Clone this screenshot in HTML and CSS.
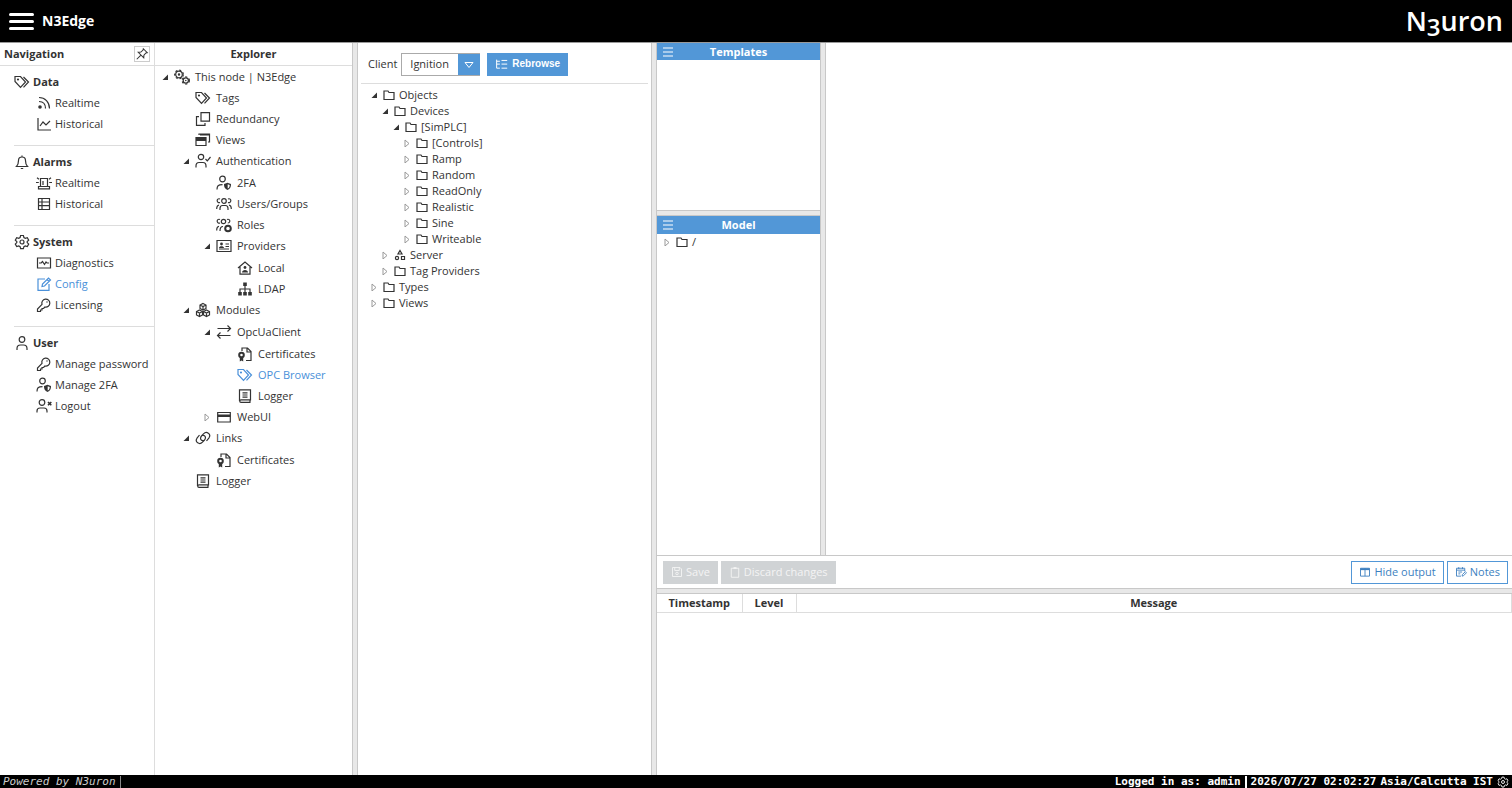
FILE: index.html
```
<!DOCTYPE html>
<html lang="en">
<head>
    <meta charset="UTF-8">
    <meta name="viewport" content="width=device-width, initial-scale=1.0">
    <title>N3Edge - N3uron WebUI</title>
    <link rel="stylesheet" href="styles.css">
</head>
<body>
    <!-- Icon set -->
    <svg class="sprite" aria-hidden="true">
        <symbol id="tags" viewBox="0 0 16 16"><path d="M1 2.500v5l5.500 5.800 5-5.300L6.500 2.500z"/><path d="M9.500 3l5 5-5 5.300"/><circle cx="4" cy="5.500" r=".5"/></symbol>
        <symbol id="rss" viewBox="0 0 16 16"><path d="M3 2.500c6 0 10.500 4.500 10.500 11M3 6.500c4 0 6.500 2.500 6.500 7"/><circle class="fill" cx="4" cy="12" r="1.800"/></symbol>
        <symbol id="chart" viewBox="0 0 16 16"><path d="M2 2v12h13M4 10l3-4 3 3 4-4"/></symbol>
        <symbol id="bell" viewBox="0 0 16 16"><path d="M2.500 12.500c1.500-1.500 2-3 2-6a3.500 3.500 0 0 1 7 0c0 3 .5 4.500 2 6zM8 3V1.500M6.800 14.500h2.400"/></symbol>
        <symbol id="siren" viewBox="0 0 16 16"><path d="M2.500 13.800h11v-2.300h-11zM4.500 11.500V3.500h7v8M7 10V6M0 7.500h2.800M13.200 7.500H16M1 2.800l2 1.500M15 2.800l-2 1.500"/></symbol>
        <symbol id="table" viewBox="0 0 16 16"><path d="M2.500 2.500h11v11h-11zM6 2.500v11M2.500 6h11M2.500 9.700h11"/></symbol>
        <symbol id="gear" viewBox="0 0 16 16"><path d="M6.600 1.500h2.800l.5 2 1.400.8 2-.6 1.400 2.500-1.500 1.400v1l1.500 1.400-1.400 2.500-2-.6-1.400.8-.5 2H6.600l-.5-2-1.400-.8-2 .6L1.300 10l1.500-1.400v-1L1.300 6.200l1.400-2.500 2 .6 1.400-.8z"/><circle cx="8" cy="8" r="2"/></symbol>
        <symbol id="diag" viewBox="0 0 16 16"><path d="M1.500 3h13v10h-13zM3 8h2.200L6.500 6.500l2 3L10 7l1 1h2"/></symbol>
        <symbol id="edit" viewBox="0 0 16 16"><path d="M9 3H2v11.300h11V8M6 10.500l.5-2.500 6-6 2 2-6 6zM11 3.500l2 2"/></symbol>
        <symbol id="key" viewBox="0 0 16 16"><path d="M6 7.300A4 4 0 1 1 9 10L7.500 11.500H6V13H4.500v1.500h-3V12z"/><circle class="fill" cx="11" cy="5" r=".7"/></symbol>
        <symbol id="user" viewBox="0 0 16 16"><circle cx="8" cy="4.500" r="2.800"/><path d="M3 15v-1.500c0-2.500 1.500-3.500 3.500-3.500h3c2 0 3.500 1 3.500 3.500V15"/></symbol>
        <symbol id="user-shield" viewBox="0 0 16 16"><circle cx="6.500" cy="4" r="2.800"/><path d="M1 14.500c0-3.500 1-4.800 5.500-4.800"/><path class="fill" d="M8 9l3.500-1.200L15 9c.2 3-1 5-3.500 6C9 14 7.800 12 8 9z"/><path class="paper" d="M11.700 9.200l2 .7c0 1.800-.6 2.900-2 3.700z"/></symbol>
        <symbol id="user-x" viewBox="0 0 16 16"><circle cx="6" cy="4.500" r="2.800"/><path d="M1 14.500v-1.500c0-2 1-3 3-3h4c2 0 3 1 3 3v1.500"/><path class="bold" d="M12 4l3.300 3.300M15.300 4L12 7.300"/></symbol>
        <symbol id="user-check" viewBox="0 0 16 16"><circle cx="6" cy="4" r="2.700"/><path d="M1 14.500v-1.500c0-2.500 1-3.500 3-3.500h4c2 0 3 1 3 3.500v1.500M10.500 6l1.800 1.800L15.500 4"/></symbol>
        <symbol id="users" viewBox="0 0 16 16"><circle cx="8" cy="5" r="2.300"/><path d="M4 14v-1.500c0-2 1-3 2.500-3h3c1.500 0 2.500 1 2.500 3V14M4 3C2.200 2.200 1 3.500 1.200 5c.2 1.300 1.500 2 2.800 1.500M12 3c1.800-.8 3 .5 2.800 2-.2 1.300-1.500 2-2.800 1.500M.7 13c0-2.500.3-3.700 2.300-3.900M15.300 13c0-2.500-.3-3.700-2.300-3.900"/></symbol>
        <symbol id="roles" viewBox="0 0 16 16"><circle cx="7.500" cy="4.500" r="2.200"/><path d="M4 14c0-3 .7-4.500 3-4.500M4 2.500C2.200 1.700 1 3 1.200 4.500 1.400 5.800 2.700 6.500 4 6M11 2.500c1.800-.8 3 .5 2.800 2-.2 1-1 1.500-2 1.500M.7 13.500c0-2.500.3-4 2.300-4.200"/><circle class="thick" cx="12" cy="11.500" r="2.800"/></symbol>
        <symbol id="gears" viewBox="0 0 16 16"><circle cx="5" cy="5.500" r="3.300"/><circle class="teeth" cx="5" cy="5.500" r="4.300"/><circle cx="5" cy="5.500" r=".6"/><circle cx="11.800" cy="11.500" r="2.600"/><circle class="teeth" cx="11.800" cy="11.500" r="3.600"/><circle class="fill" cx="11.800" cy="11.500" r=".8"/></symbol>
        <symbol id="copy" viewBox="0 0 16 16"><path d="M6 1.700h8.500v8.500H6zM4 5.700H1.500v8.600h8.500V12"/></symbol>
        <symbol id="windows" viewBox="0 0 16 16"><path d="M1 5.500h10v8H1zM4 3V2h10.500v8H13"/><path class="fill" d="M1 5.500h10v3.500H1zM5 2h9v1.500H5z"/></symbol>
        <symbol id="card" viewBox="0 0 16 16"><path d="M1 2.500h14v11H1zM9.500 6H13M9.500 8.500H13M3 11h10"/><circle class="fill" cx="5.500" cy="6" r="1.400"/><path class="fill" d="M3 10c0-2.500 5-2.500 5 0z"/></symbol>
        <symbol id="house" viewBox="0 0 16 16"><path d="M1 8l7-6 7 6M3 7v7.200h10V7"/><circle class="fill" cx="8" cy="7.500" r="1.400"/><path class="fill" d="M5 12.500c0-3.500 6-3.500 6 0z"/></symbol>
        <symbol id="ldap" viewBox="0 0 16 16"><path d="M8 5v6M3 11V8h10v3"/><path class="fill" d="M6.200 1.500h3.600V5H6.200zM1.200 11h3.600v3.500H1.200zM6.200 11h3.600v3.500H6.200zM11.200 11h3.600v3.500h-3.600z"/></symbol>
        <symbol id="cubes" viewBox="0 0 16 16"><path d="M8 1.500l3 1.500v3.500L8 8 5 6.500V3zM5 3l3 1.500L11 3M8 4.500V8M4.500 8l3 1.500V13l-3 1.500-3-1.500V9.500zM1.500 9.500l3 1.500 3-1.500M4.500 11v3.500M11.500 8l3 1.500V13l-3 1.500-3-1.500V9.500zM8.500 9.500l3 1.500 3-1.500M11.500 11v3.500"/></symbol>
        <symbol id="swap" viewBox="0 0 16 16"><path d="M1.500 4.500h13M11.500 1.500l3 3-3 3M14.500 11.500h-13M4.500 8.500l-3 3 3 3"/></symbol>
        <symbol id="cert" viewBox="0 0 16 16"><path d="M5 5V2h5.500l3.500 3.500v9H9M10 2v4h4"/><circle class="thick" cx="4.500" cy="9" r="2.300"/><path class="fill" d="M2.800 11h3.400v4.500l-1.700-1-1.700 1z"/></symbol>
        <symbol id="book" viewBox="0 0 16 16"><path d="M2.500 13V1.800h11v10H4a1.300 1.300 0 0 0 0 2.600h9.500M5.500 4.800h5M5.500 7h5M5.500 9.200h5M13 12v2.500"/></symbol>
        <symbol id="window" viewBox="0 0 16 16"><path d="M1.700 3.500h12.600v9.500H1.700z"/><path class="fill" d="M1.700 5.500h12.600V8H1.700z"/></symbol>
        <symbol id="link" viewBox="0 0 16 16"><path d="M8.500 10.500C5.500 11 4.800 8 6.500 6l2-2.200c3-3 8 0 5.500 4L11.500 11M7.500 5.500c3-.5 3.700 2.500 2 4.500l-2 2.200c-3 3-8 0-5.500-4L4.500 5"/></symbol>
        <symbol id="folder" viewBox="0 0 12 12"><path d="M1 2h4l1 1.500h5V10.500H1z"/></symbol>
        <symbol id="shapes" viewBox="0 0 12 12"><path d="M6 1.500L8 5H4zM7.500 7.500h3v3h-3z"/><circle cx="3" cy="9" r="1.600"/></symbol>
        <symbol id="pin" viewBox="0 0 16 16"><path d="M9.500 2l4.500 4.500-1.500.3-2.300 2.500-.2 3L3.700 6l3-.2 2.500-2.300zM6.500 9.500L2 14"/></symbol>
        <symbol id="tree" viewBox="0 0 16 16"><path d="M2 2v10.500h4M2 4h4M8 3h7M2 7.500h4M8 7.500h7M8 12.500h7"/></symbol>
        <symbol id="menu" viewBox="0 0 12 12"><path d="M1 2h10M1 6h10M1 10h10"/></symbol>
        <symbol id="save" viewBox="0 0 16 16"><path d="M2 2h10l2 2v10H2zM5 2v4h6V2"/><circle cx="8" cy="10" r="1.700"/></symbol>
        <symbol id="clipboard" viewBox="0 0 16 16"><path d="M3 3h10v12H3z"/><path class="fill" d="M6 1.500h4v2.500H6z"/></symbol>
        <symbol id="columns" viewBox="0 0 16 16"><path d="M2 3h12v10.500H2zM8 3v10.500"/><path class="fill" d="M2 3h12v2.500H2z"/></symbol>
        <symbol id="notes" viewBox="0 0 16 16"><path d="M8 13.500H2V3h11v4M2 5.500h11M5 1.500V4M10 1.500V4M4.500 8h5M4.500 10.500H7M9.500 13.500l.3-2 4-4 1.500 1.500-4 4z"/></symbol>
        <symbol id="open" viewBox="0 0 8 8"><path class="fill" d="M7 1.500V7H1.500z"/></symbol>
        <symbol id="closed" viewBox="0 0 8 8"><path d="M2 1l4 3.500L2 8z"/></symbol>
    </svg>

    <header class="topbar">
        <button class="burger" aria-label="Menu"><span></span><span></span><span></span></button>
        <h1>N3Edge</h1>
        <div class="logo">N<span>3</span>uron</div>
    </header>

    <main class="workspace">
        <!-- Navigation -->
        <nav class="navigation">
            <div class="panel-head">
                <h2>Navigation</h2>
                <button class="pin" aria-label="Pin"><svg class="icon"><use href="#pin"/></svg></button>
            </div>
            <section>
                <h3><svg class="icon"><use href="#tags"/></svg>Data</h3>
                <a href="#"><svg class="icon"><use href="#rss"/></svg>Realtime</a>
                <a href="#"><svg class="icon"><use href="#chart"/></svg>Historical</a>
            </section>
            <section>
                <h3><svg class="icon"><use href="#bell"/></svg>Alarms</h3>
                <a href="#"><svg class="icon"><use href="#siren"/></svg>Realtime</a>
                <a href="#"><svg class="icon"><use href="#table"/></svg>Historical</a>
            </section>
            <section>
                <h3><svg class="icon"><use href="#gear"/></svg>System</h3>
                <a href="#"><svg class="icon"><use href="#diag"/></svg>Diagnostics</a>
                <a href="#" class="active"><svg class="icon"><use href="#edit"/></svg>Config</a>
                <a href="#"><svg class="icon"><use href="#key"/></svg>Licensing</a>
            </section>
            <section>
                <h3><svg class="icon"><use href="#user"/></svg>User</h3>
                <a href="#"><svg class="icon"><use href="#key"/></svg>Manage password</a>
                <a href="#"><svg class="icon"><use href="#user-shield"/></svg>Manage 2FA</a>
                <a href="#"><svg class="icon"><use href="#user-x"/></svg>Logout</a>
            </section>
        </nav>

        <!-- Explorer -->
        <aside class="explorer">
            <div class="panel-head"><h2>Explorer</h2></div>
            <ul class="tree">
                <li><a href="#"><svg class="arrow"><use href="#open"/></svg><svg class="icon"><use href="#gears"/></svg>This node | N3Edge</a>
                    <ul>
                        <li><a href="#" class="leaf"><svg class="icon"><use href="#tags"/></svg>Tags</a></li>
                        <li><a href="#" class="leaf"><svg class="icon"><use href="#copy"/></svg>Redundancy</a></li>
                        <li><a href="#" class="leaf"><svg class="icon"><use href="#windows"/></svg>Views</a></li>
                        <li><a href="#"><svg class="arrow"><use href="#open"/></svg><svg class="icon"><use href="#user-check"/></svg>Authentication</a>
                            <ul>
                                <li><a href="#" class="leaf"><svg class="icon"><use href="#user-shield"/></svg>2FA</a></li>
                                <li><a href="#" class="leaf"><svg class="icon"><use href="#users"/></svg>Users/Groups</a></li>
                                <li><a href="#" class="leaf"><svg class="icon"><use href="#roles"/></svg>Roles</a></li>
                                <li><a href="#"><svg class="arrow"><use href="#open"/></svg><svg class="icon"><use href="#card"/></svg>Providers</a>
                                    <ul>
                                        <li><a href="#" class="leaf"><svg class="icon"><use href="#house"/></svg>Local</a></li>
                                        <li><a href="#" class="leaf"><svg class="icon"><use href="#ldap"/></svg>LDAP</a></li>
                                    </ul>
                                </li>
                            </ul>
                        </li>
                        <li><a href="#"><svg class="arrow"><use href="#open"/></svg><svg class="icon"><use href="#cubes"/></svg>Modules</a>
                            <ul>
                                <li><a href="#"><svg class="arrow"><use href="#open"/></svg><svg class="icon"><use href="#swap"/></svg>OpcUaClient</a>
                                    <ul>
                                        <li><a href="#" class="leaf"><svg class="icon"><use href="#cert"/></svg>Certificates</a></li>
                                        <li><a href="#" class="leaf active"><svg class="icon"><use href="#tags"/></svg>OPC Browser</a></li>
                                        <li><a href="#" class="leaf"><svg class="icon"><use href="#book"/></svg>Logger</a></li>
                                    </ul>
                                </li>
                                <li><a href="#"><svg class="arrow closed"><use href="#closed"/></svg><svg class="icon"><use href="#window"/></svg>WebUI</a></li>
                            </ul>
                        </li>
                        <li><a href="#"><svg class="arrow"><use href="#open"/></svg><svg class="icon"><use href="#link"/></svg>Links</a>
                            <ul>
                                <li><a href="#" class="leaf"><svg class="icon"><use href="#cert"/></svg>Certificates</a></li>
                            </ul>
                        </li>
                        <li><a href="#" class="leaf"><svg class="icon"><use href="#book"/></svg>Logger</a></li>
                    </ul>
                </li>
            </ul>
        </aside>

        <div class="splitter"></div>

        <!-- OPC browser -->
        <section class="browser">
            <form class="client-bar">
                <label for="client">Client</label>
                <div class="select">
                    <select id="client"><option>Ignition</option></select>
                    <svg viewBox="0 0 10 8"><path d="M1 1.500h8L5 6.500z"/></svg>
                </div>
                <button type="button" class="rebrowse"><svg class="icon"><use href="#tree"/></svg>Rebrowse</button>
            </form>
            <ul class="tree compact">
                <li><a href="#"><svg class="arrow"><use href="#open"/></svg><svg class="icon"><use href="#folder"/></svg>Objects</a>
                    <ul>
                        <li><a href="#"><svg class="arrow"><use href="#open"/></svg><svg class="icon"><use href="#folder"/></svg>Devices</a>
                            <ul>
                                <li><a href="#"><svg class="arrow"><use href="#open"/></svg><svg class="icon"><use href="#folder"/></svg>[SimPLC]</a>
                                    <ul>
                                        <li><a href="#"><svg class="arrow closed"><use href="#closed"/></svg><svg class="icon"><use href="#folder"/></svg>[Controls]</a></li>
                                        <li><a href="#"><svg class="arrow closed"><use href="#closed"/></svg><svg class="icon"><use href="#folder"/></svg>Ramp</a></li>
                                        <li><a href="#"><svg class="arrow closed"><use href="#closed"/></svg><svg class="icon"><use href="#folder"/></svg>Random</a></li>
                                        <li><a href="#"><svg class="arrow closed"><use href="#closed"/></svg><svg class="icon"><use href="#folder"/></svg>ReadOnly</a></li>
                                        <li><a href="#"><svg class="arrow closed"><use href="#closed"/></svg><svg class="icon"><use href="#folder"/></svg>Realistic</a></li>
                                        <li><a href="#"><svg class="arrow closed"><use href="#closed"/></svg><svg class="icon"><use href="#folder"/></svg>Sine</a></li>
                                        <li><a href="#"><svg class="arrow closed"><use href="#closed"/></svg><svg class="icon"><use href="#folder"/></svg>Writeable</a></li>
                                    </ul>
                                </li>
                            </ul>
                        </li>
                        <li><a href="#"><svg class="arrow closed"><use href="#closed"/></svg><svg class="icon"><use href="#shapes"/></svg>Server</a></li>
                        <li><a href="#"><svg class="arrow closed"><use href="#closed"/></svg><svg class="icon"><use href="#folder"/></svg>Tag Providers</a></li>
                    </ul>
                </li>
                <li><a href="#"><svg class="arrow closed"><use href="#closed"/></svg><svg class="icon"><use href="#folder"/></svg>Types</a></li>
                <li><a href="#"><svg class="arrow closed"><use href="#closed"/></svg><svg class="icon"><use href="#folder"/></svg>Views</a></li>
            </ul>
        </section>

        <div class="splitter"></div>

        <div class="editor">
            <div class="editor-top">
                <div class="models">
                    <section class="templates">
                        <div class="blue-head">
                            <button aria-label="Templates menu"><svg class="icon"><use href="#menu"/></svg></button>
                            <h2>Templates</h2>
                        </div>
                    </section>
                    <div class="splitter horizontal"></div>
                    <section class="model">
                        <div class="blue-head">
                            <button aria-label="Model menu"><svg class="icon"><use href="#menu"/></svg></button>
                            <h2>Model</h2>
                        </div>
                        <ul class="tree compact">
                            <li><a href="#"><svg class="arrow closed"><use href="#closed"/></svg><svg class="icon"><use href="#folder"/></svg>/</a></li>
                        </ul>
                    </section>
                </div>
                <div class="splitter"></div>
            </div>

            <div class="toolbar">
                <button class="btn" disabled><svg class="icon"><use href="#save"/></svg>Save</button>
                <button class="btn" disabled><svg class="icon"><use href="#clipboard"/></svg>Discard changes</button>
                <span class="spacer"></span>
                <button class="btn outline"><svg class="icon"><use href="#columns"/></svg>Hide output</button>
                <button class="btn outline"><svg class="icon"><use href="#notes"/></svg>Notes</button>
            </div>
            <div class="splitter horizontal"></div>

            <!-- Output -->
            <div class="output">
                <table>
                    <thead>
                        <tr><th class="col-time">Timestamp</th><th class="col-level">Level</th><th>Message</th></tr>
                    </thead>
                </table>
            </div>
        </div>
    </main>

    <footer class="statusbar">
        <em>Powered by N3uron</em>
        <span class="spacer"></span>
        <strong class="login">Logged in as: admin</strong>
        <strong class="clock">2026/07/27 02:02:27</strong>
        <strong>Asia/Calcutta IST</strong>
        <button aria-label="Settings"><svg class="icon"><use href="#gear"/></svg></button>
    </footer>
</body>
</html>
```
FILE: styles.css
```
* {
    box-sizing: border-box;
    margin: 0;
    padding: 0;
}

body {
    display: flex;
    flex-direction: column;
    height: 100vh;
    font-family: "Open Sans", sans-serif;
    font-size: 11px;
    line-height: 16px;
    color: #333;
    background: #fff;
    overflow: hidden;
}

ul {
    list-style: none;
}

a {
    color: inherit;
    text-decoration: none;
}

button {
    border: none;
    background: none;
    color: inherit;
    font: inherit;
    cursor: pointer;
}

h2, h3 {
    font-size: 11px;
    font-weight: 700;
}

.sprite {
    position: absolute;
    width: 0;
    height: 0;
}

.icon {
    flex: none;
    width: 16px;
    height: 16px;
    fill: none;
    stroke: currentColor;
    stroke-width: 1.2;
}

.fill {
    fill: currentColor;
    stroke: none;
}

.paper {
    fill: #fff;
    stroke: none;
}

.bold {
    stroke-width: 1.6;
}

.thick {
    stroke-width: 2;
}

.teeth {
    stroke-dasharray: 2 2;
}

.spacer {
    flex: 1;
}

/* Top bar */
.topbar {
    display: flex;
    flex: none;
    align-items: center;
    height: 43px;
    padding: 0 9px;
    background: #000;
    border-bottom: 1px solid #999;
    color: #fff;
}

.topbar h1 {
    flex: 1;
    font-size: 14px;
    line-height: 20px;
}

.burger {
    display: flex;
    flex-direction: column;
    gap: 4px;
    width: 25px;
    margin-right: 8px;
}

.burger span {
    height: 3px;
    border-radius: 2px;
    background: #fff;
}

.logo {
    font-family: "Open Sans", sans-serif;
    font-size: 27px;
    font-weight: 600;
    line-height: 32px;
}

.logo span {
    font-size: 24px;
    line-height: 20px;
    vertical-align: -5px;
}

/* Panels */
.workspace {
    display: flex;
    flex: 1;
    min-height: 0;
}

.splitter {
    flex: none;
    width: 6px;
    background: #e8e8e8;
    border: solid #c8c8c8;
    border-width: 0 1px;
}

.splitter.horizontal {
    width: auto;
    height: 6px;
    border-width: 1px 0;
}

.panel-head {
    display: flex;
    align-items: center;
    height: 23px;
    border-bottom: 1px solid #ddd;
}

.panel-head h2 {
    flex: 1;
}

.navigation {
    flex: none;
    width: 155px;
    border-right: 1px solid #ddd;
}

.navigation .panel-head {
    padding: 0 4px;
}

.pin {
    display: flex;
    width: 16px;
    height: 16px;
    border: 1px solid #ccc;
}

.pin .icon {
    width: 14px;
    height: 14px;
}

.navigation section {
    margin-left: 14px;
    padding: 5px 0 11px;
    border-bottom: 1px solid #ddd;
}

.navigation section:last-child {
    border-bottom: none;
}

.navigation h3,
.navigation a {
    display: flex;
    align-items: center;
    gap: 3px;
    height: 21px;
    white-space: nowrap;
}

.navigation a {
    padding-left: 22px;
}

.navigation .active,
.tree .active {
    color: #4a90d9;
}

.explorer {
    flex: none;
    width: 197px;
}

.explorer h2 {
    text-align: center;
}

/* Trees */
.tree a {
    display: flex;
    align-items: center;
    height: 21px;
    white-space: nowrap;
}

.tree .icon {
    margin-right: 5px;
}

.tree ul {
    padding-left: 21px;
}

.tree ul ul {
    padding-top: 1px;
}

.arrow {
    flex: none;
    width: 8px;
    height: 8px;
    margin-right: 5px;
    fill: none;
}

.arrow.closed {
    stroke: #999;
}

.explorer .tree {
    padding-left: 6px;
}

.tree .leaf {
    padding-left: 13px;
}

.tree.compact a {
    height: 16px;
}

.tree.compact ul {
    padding: 0 0 0 11px;
}

.compact .icon {
    width: 12px;
    height: 12px;
    margin-right: 4px;
}

.browser {
    flex: none;
    width: 293px;
    padding: 0 3px;
}

.browser .tree {
    padding: 3px 0 0 9px;
}

.client-bar {
    display: flex;
    align-items: center;
    height: 41px;
    padding: 2px 7px 0;
    border-bottom: 1px solid #ddd;
}

.select {
    position: relative;
    width: 79px;
    height: 23px;
    margin: 0 7px 0 4px;
}

.select select {
    appearance: none;
    width: 100%;
    height: 100%;
    padding-left: 8px;
    border: 1px solid #aaa;
    border-right: none;
    border-radius: 0;
    background: linear-gradient(#5297d7, #5297d7) right / 22px no-repeat #fff;
    background-origin: border-box;
    color: #333;
    font: inherit;
}

.select svg {
    position: absolute;
    top: 8px;
    right: 6px;
    width: 10px;
    height: 8px;
    fill: none;
    stroke: #fff;
    pointer-events: none;
}

.rebrowse {
    display: flex;
    align-items: center;
    gap: 4px;
    height: 23px;
    padding: 0 8px;
    background: #5297d7;
    color: #fff;
    font-family: "Liberation Sans", sans-serif;
    font-size: 10px;
    font-weight: 700;
}

.rebrowse .icon {
    width: 13px;
    height: 13px;
}

/* Editor */
.editor {
    display: flex;
    flex: 1;
    flex-direction: column;
    min-width: 0;
}

.editor-top {
    display: flex;
    flex: 0 0 calc(70% + 1px);
    border-bottom: 1px solid #c8c8c8;
}

.models {
    display: flex;
    flex: none;
    flex-direction: column;
    width: 163px;
}

.templates {
    flex: 0 0 167px;
}

.model {
    flex: 1;
}

.blue-head {
    display: flex;
    align-items: center;
    height: 17px;
    padding: 0 17px 0 5px;
    background: #5297d7;
    color: #fff;
}

.blue-head button {
    display: flex;
}

.blue-head .icon {
    width: 12px;
    height: 12px;
}

.blue-head h2 {
    flex: 1;
    text-align: center;
}

.model .blue-head {
    height: 18px;
}

.model .tree {
    padding-left: 6px;
}

.toolbar {
    display: flex;
    flex: none;
    align-items: center;
    gap: 3px;
    height: 32px;
    padding: 0 4px 0 6px;
}

.btn {
    display: flex;
    align-items: center;
    gap: 3px;
    height: 23px;
    padding: 0 7px;
    border: 1px solid #d0d3d5;
}

.btn:disabled {
    background: #d0d3d5;
    color: #f4f4f4;
    cursor: default;
}

.btn.outline {
    border-color: #5297d7;
    color: #3d7fbf;
}

.btn .icon {
    width: 12px;
    height: 12px;
}

.output table {
    width: 100%;
    border-collapse: collapse;
    table-layout: fixed;
}

.output th {
    height: 18px;
    border: solid #ddd;
    border-width: 0 1px 1px 0;
}

.col-time {
    width: 85px;
}

.col-level {
    width: 54px;
}

/* Status bar */
.statusbar {
    display: flex;
    flex: none;
    align-items: center;
    height: 13px;
    padding: 0 3px;
    background: #000;
    color: #fff;
    font-family: "DejaVu Sans Mono", monospace;
    font-size: 11px;
    line-height: 12px;
    white-space: pre;
}

.statusbar em {
    padding-right: 4px;
    border-right: 1px solid #888;
    color: #ccc;
}

.statusbar .login {
    padding-right: 4px;
    border-right: 2px solid #fff;
}

.statusbar .clock {
    padding: 0 4px;
}

.statusbar button {
    display: flex;
    margin-left: 4px;
}

.statusbar .icon {
    width: 12px;
    height: 12px;
}
```
